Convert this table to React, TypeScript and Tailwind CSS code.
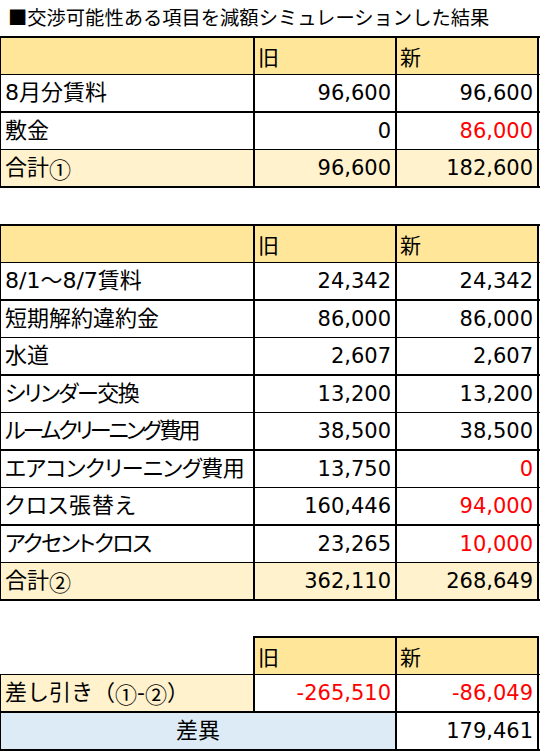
import type { ReactNode } from "react";

type RowProps = {
  label: ReactNode;
  a: string;
  b: string;
  redA?: boolean;
  redB?: boolean;
  kind?: "head" | "total" | "body";
  thick?: boolean;
  track?: string;
};

const font = "font-['DejaVu_Sans','Noto_Sans_CJK_JP',sans-serif]";
const cjk = "font-['Noto_Sans_CJK_JP',sans-serif]";
const label = "[font-feature-settings:'palt'] text-[22px]";

function Circled({ n }: { n: string }) {
  return <span className={cjk}>{n}</span>;
}

function Row({ label: text, a, b, redA, redB, kind = "body", thick, track = "" }: RowProps) {
  const bg =
    kind === "head" ? "bg-[#ffe699]" : kind === "total" ? "bg-[#fff2cc]" : "bg-white";
  const head = kind === "head";
  return (
    <div
      className={`flex border-l border-black ${
        thick ? "h-[38px] border-b-2" : "h-[37px] border-b"
      }`}
    >
      <div
        className={`flex w-[254px] items-center whitespace-nowrap border-r-2 border-black pl-[4px] ${label} ${track} ${bg}`}
      >
        {text}
      </div>
      <div
        className={`flex w-[142px] items-center border-r-2 border-black text-[21px] ${bg} ${
          head ? `pl-[3px] ${cjk}` : "justify-end pr-[4px]"
        } ${redA ? "text-[#ff0000]" : ""}`}
      >
        {a}
      </div>
      <div
        className={`flex w-[142px] items-center border-r-2 border-black text-[21px] ${bg} ${
          head ? `pl-[3px] ${cjk}` : "justify-end pr-[4px]"
        } ${redB ? "text-[#ff0000]" : ""}`}
      >
        {b}
      </div>
    </div>
  );
}

const costs: RowProps[] = [
  { label: "8/1～8/7賃料", a: "24,342", b: "24,342" },
  { label: "短期解約違約金", a: "86,000", b: "86,000" },
  { label: "水道", a: "2,607", b: "2,607" },
  { label: "シリンダー交換", a: "13,200", b: "13,200", track: "tracking-[-1.5px]" },
  { label: "ルームクリーニング費用", a: "38,500", b: "38,500", track: "tracking-[-3px]" },
  { label: "エアコンクリーニング費用", a: "13,750", b: "0", redB: true, track: "tracking-[-0.5px]" },
  { label: "クロス張替え", a: "160,446", b: "94,000", redB: true, track: "tracking-[1px]" },
  { label: "アクセントクロス", a: "23,265", b: "10,000", redB: true, track: "tracking-[-1.5px]" },
  {
    label: (
      <>
        合計<Circled n="②" />
      </>
    ),
    a: "362,110",
    b: "268,649",
    kind: "total",
  },
];

export default function App() {
  return (
    <div className={`w-[540px] h-[751px] overflow-hidden bg-white text-black leading-none ${font}`}>
      <div className={`flex h-[36px] items-center pl-[8px] text-[19.3px] ${cjk}`}>
        ■交渉可能性ある項目を減額シミュレーションした結果
      </div>

      {/* 月額・初期費用 */}
      <div className="border-t-2 border-black">
        <Row label="" a="旧" b="新" kind="head" />
        <Row label="8月分賃料" a="96,600" b="96,600" thick />
        <Row label="敷金" a="0" b="86,000" redB />
        <Row
          label={
            <>
              合計<Circled n="①" />
            </>
          }
          a="96,600"
          b="182,600"
          kind="total"
          thick
        />
      </div>

      {/* 退去費用 */}
      <div className="mt-[36px] border-t-2 border-black">
        <Row label="" a="旧" b="新" kind="head" />
        {costs.map((r, i) => (
          <Row key={i} {...r} thick={i % 2 === 0} />
        ))}
      </div>

      {/* 差額 */}
      <div className="mt-[35px]">
        <div className="flex h-[38px]">
          <div className="w-[253px]" />
          <div className={`flex w-[144px] items-center border-x-2 border-t-2 border-black bg-[#ffe699] pl-[3px] text-[21px] ${cjk}`}>
            旧
          </div>
          <div className={`flex w-[142px] items-center border-r-2 border-t-2 border-black bg-[#ffe699] pl-[3px] text-[21px] ${cjk}`}>
            新
          </div>
        </div>
        <div className="flex h-[39px] border-l border-t border-b-2 border-black">
          <div className="flex w-[254px] items-center border-r-2 border-black bg-[#fff2cc] pl-[4px] text-[22px]">
            差し引き（<Circled n="①" />-<Circled n="②" />）
          </div>
          <div className="flex w-[142px] items-center justify-end border-r-2 border-black pr-[4px] text-[21px] text-[#ff0000]">
            -265,510
          </div>
          <div className="flex w-[142px] items-center justify-end border-r-2 border-black pr-[4px] text-[21px] text-[#ff0000]">
            -86,049
          </div>
        </div>
        <div className="flex h-[38px] border-l border-b-2 border-black">
          <div className={`flex w-[396px] items-center justify-center border-r-2 border-black bg-[#ddebf7] ${label}`}>
            差異
          </div>
          <div className="flex w-[142px] items-center justify-end border-r-2 border-black pr-[4px] text-[21px]">
            179,461
          </div>
        </div>
      </div>
    </div>
  );
}
